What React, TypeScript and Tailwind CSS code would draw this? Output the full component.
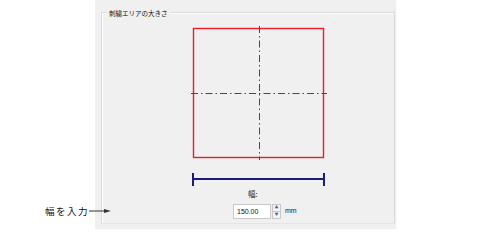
export default function App() {
  return (
    <div
      className="relative w-[485px] h-[247px] bg-white overflow-hidden"
      style={{ fontFamily: '"Noto Sans CJK JP", "Liberation Sans", sans-serif' }}
    >
      <div className="ml-[95px] w-[302px] h-[230px] bg-[#f0f0f0] border-r border-b border-[#fafafa] pt-[12px] pl-[6px]">
        <div className="relative w-[294px] h-[212px] border border-[#dadada] border-b-[#dde6ee] shadow-[inset_1px_1px_0_#ffffff]">
          <span className="absolute -top-[6px] left-[5px] px-[2px] bg-[#f0f0f0] text-[6.5px] leading-[12px] text-[#111]">
            刺繍エリアの大きさ
          </span>

          <div className="pl-[86px] pt-[11px]">
            <svg width="142" height="164" viewBox="0 0 142 164" className="block">
              <rect x="5.5" y="4.5" width="130" height="129" fill="none" stroke="#ee1c24" strokeWidth="1.4" />
              <line x1="71.5" y1="2" x2="71.5" y2="136" stroke="#3c3cb4" strokeWidth="1" strokeDasharray="7 3 1.5 3" />
              <line x1="3" y1="69.5" x2="139" y2="69.5" stroke="#3c3cb4" strokeWidth="1" strokeDasharray="7 3 1.5 3" />
              <line x1="5" y1="155" x2="136" y2="155" stroke="#1c1c78" strokeWidth="2" />
              <line x1="5" y1="149" x2="5" y2="162" stroke="#1c1c78" strokeWidth="2" />
              <line x1="136" y1="149" x2="136" y2="162" stroke="#1c1c78" strokeWidth="2" />
            </svg>

            <div className="pl-[60px] mt-[1px] text-[7.5px] leading-[10px] text-[#222]">幅:</div>

            <div className="flex items-center pl-[45px] mt-[5px]">
              <div className="w-[38px] h-[15px] bg-white border border-[#c8c8c8] text-[7px] leading-[13px] pl-[3px] text-[#111]" style={{ fontFamily: '"Liberation Sans", sans-serif' }}>
                150.00
              </div>
              <div className="ml-[1px] w-[9px] h-[15px] flex flex-col">
                <div className="flex-1 border border-[#c8c8c8] bg-[#f4f4f4] text-[4px] leading-[5px] text-center text-[#4a6a9a]">▲</div>
                <div className="flex-1 border border-t-0 border-[#c8c8c8] bg-[#f4f4f4] text-[4px] leading-[5px] text-center text-[#4a6a9a]">▼</div>
              </div>
              <span className="ml-[4px] text-[7px] text-[#222]" style={{ fontFamily: '"Liberation Sans", sans-serif' }}>mm</span>
            </div>
          </div>
        </div>
      </div>

      <div className="absolute left-[45px] top-[204px] flex items-center">
        <span className="text-[9.5px] leading-[14px] tracking-[1.5px] text-[#111]">幅を入力</span>
        <svg width="22" height="6" viewBox="0 0 22 6" className="block">
          <line x1="0" y1="3" x2="17" y2="3" stroke="#333" strokeWidth="1" />
          <polygon points="15,1 22,3 15,5" fill="#333" />
        </svg>
      </div>
    </div>
  );
}
